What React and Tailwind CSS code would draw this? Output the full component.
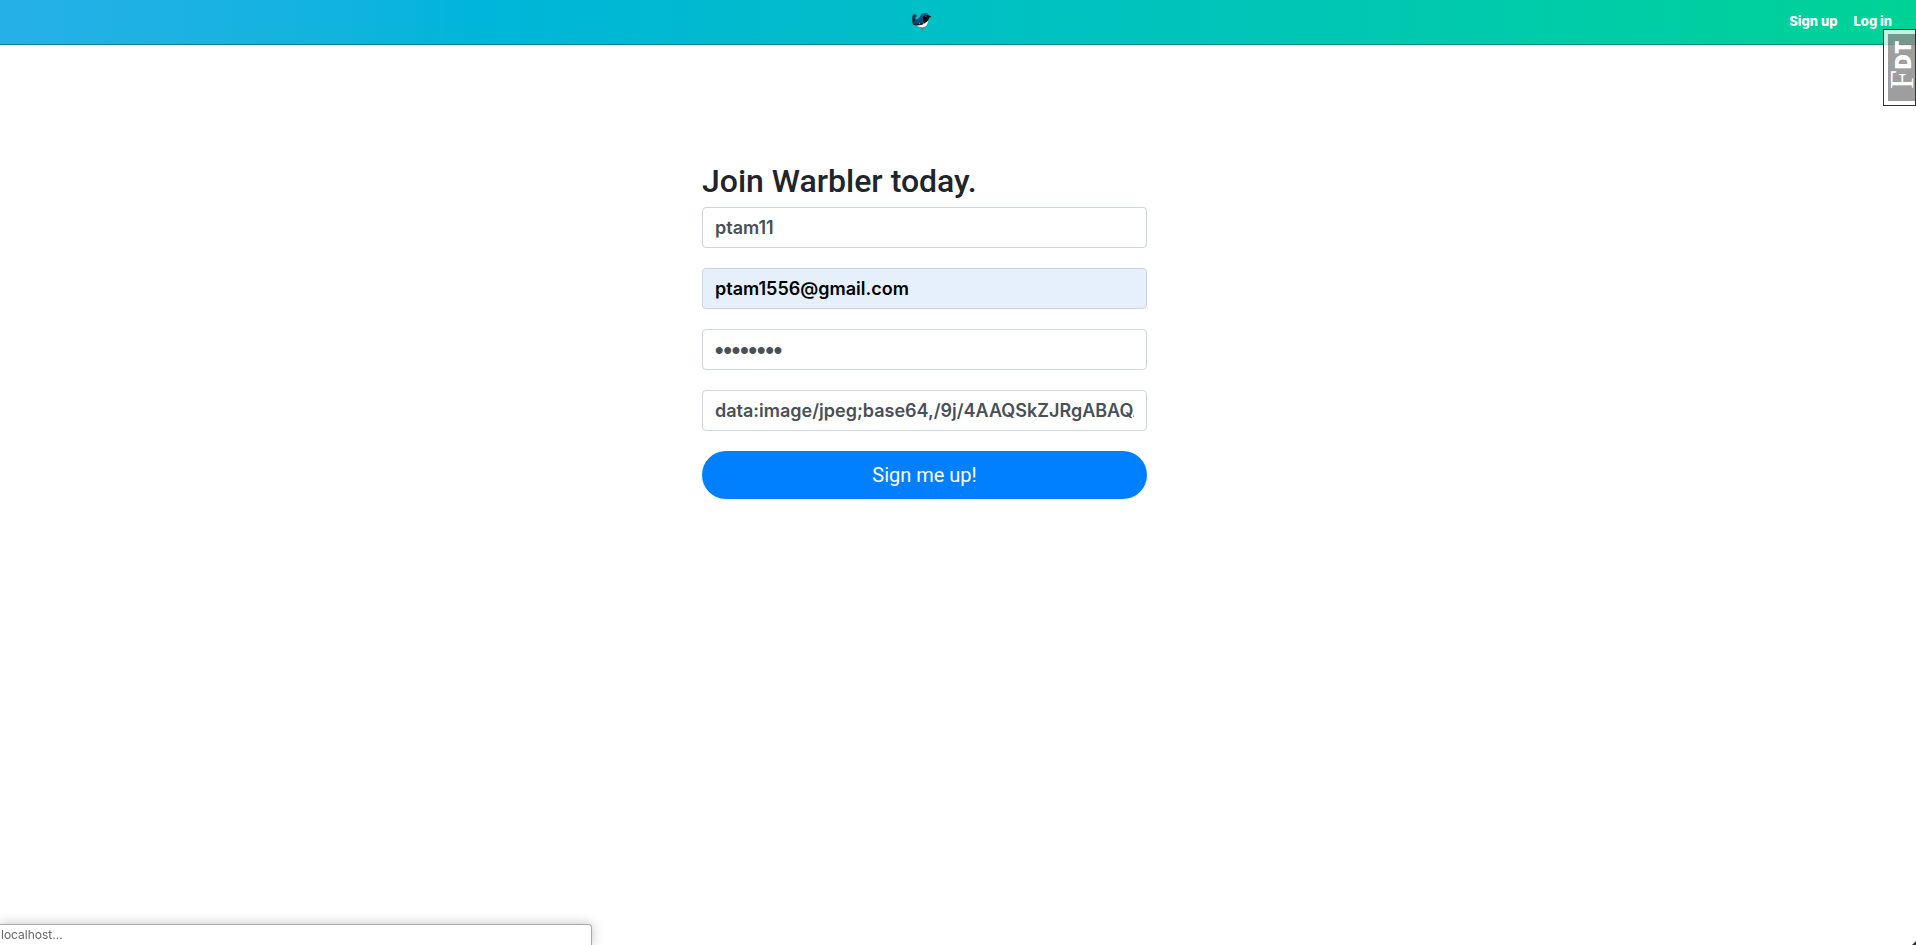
function BirdLogo() {
  return (
    <svg viewBox="0 0 60 51" className="block h-[17px] w-5" aria-hidden="true">
      <path d="M25 41l6 6M37 41l-5 5 1 4" stroke="#8a5a48" strokeWidth="3" fill="none" />
      <path d="M12 34c4 6 10 9 17 9 12 0 19-8 20-22l-10 2z" fill="#fff" />
      <path d="M2 9l4-5 6 1 2 4-4 5 2 5c4 1 7-3 12-8 3-7 8-10 14-10 7 0 12 4 13 8l-4 12-8 5-6 8c-8 3-19 3-29 1l-3-4z" fill="#0d4a78" />
      <path d="M1 10l5-6 6 1 2 4-5 3-2 6 3 4-4 8H2z" fill="#0f2c40" />
      <path d="M33 9l8-3 9 1 9 4-8 4c-1 7-4 11-9 13l-5 4-3-8z" fill="#060d15" />
      <path d="M27 9c2-6 8-8 13-8 5 0 9 2 11 5l-11-1-7 6z" fill="#1a658c" />
      <path d="M3 32l10 1 10-3 8 1 2 3-6 2c-9 2-17 1-23-1z" fill="#101d29" />
      <circle cx="42" cy="9" r="1.6" fill="#d5eaf2" />
      <path d="M20 32l5-2-2 4z" fill="#dce7ee" />
    </svg>
  );
}

const fields = [
  { id: "username", label: "Username", type: "text", value: "ptam11", look: "text-[18px] bg-white text-[#495057]" },
  { id: "email", label: "E-mail", type: "email", value: "ptam1556@gmail.com", look: "text-[18px] bg-[#e6effc] text-black" },
  {
    id: "password",
    label: "Password",
    type: "password",
    value: "password",
    look: "font-['Liberation_Sans',sans-serif] text-[24px] bg-white text-[#495057]",
  },
  {
    id: "image",
    label: "Image URL",
    type: "text",
    value: "data:image/jpeg;base64,/9j/4AAQSkZJRgABAQAAAQABAAD",
    look: "text-[18px] bg-white text-[#495057]",
  },
];

export default function App() {
  return (
    <div className="flex min-h-screen flex-col bg-white font-['Inter',sans-serif]">
      <header className="grid h-[45px] grid-cols-[1fr_auto_1fr] items-center border-b border-black/30 bg-linear-to-r from-[#25b0e8] from-0% via-[#00b5da] via-25% to-[#00d296] to-100% px-6">
        <span />
        <a href="#home" aria-label="Warbler" className="mr-[72px] pb-px">
          <BirdLogo />
        </a>
        <nav className="flex justify-end gap-4 pb-0.5 text-[13px] leading-5 font-extrabold text-white">
          <a href="#signup">Sign up</a>
          <a href="#login">Log in</a>
        </nav>
      </header>

      <main className="flex flex-1 justify-center px-4 pt-[116px] md:pr-[83px]">
        <form className="w-full max-w-[445px]" onSubmit={(e) => e.preventDefault()}>
          <h2 className="mb-1.5 font-['Roboto',sans-serif] text-[32px] leading-10 font-medium text-[#212529]">
            Join Warbler today.
          </h2>
          <div className="mb-5 flex flex-col gap-5">
            {fields.map((f) => (
              <input
                key={f.id}
                id={f.id}
                aria-label={f.label}
                type={f.type}
                defaultValue={f.value}
                className={`block h-[41px] w-full rounded border border-[#ced4da] px-3 font-semibold outline-none ${f.look}`}
              />
            ))}
          </div>
          <button
            type="submit"
            className="h-12 w-full rounded-full bg-[#0080ff] font-['Roboto',sans-serif] text-[20px] text-white"
          >
            Sign me up!
          </button>
        </form>
      </main>

      <button
        type="button"
        aria-label="FDT"
        className="absolute top-[29px] right-0 h-[77px] w-[33px] border border-black/80 bg-white/75 p-1 pr-0"
      >
        <span className="flex h-full w-full rotate-180 items-center justify-center bg-black/38 pt-1.5 leading-none text-white [writing-mode:vertical-rl]">
          <span className="font-['Liberation_Serif',serif] text-[34px] leading-none">F</span>
          <span className="font-['Open_Sans',sans-serif] text-[22px] leading-none font-extrabold">DT</span>
        </span>
      </button>

      <div className="fixed bottom-0 left-0 h-[21px] w-[592px] rounded-tr border-t border-r border-[#aaa] bg-white pl-px text-[12px] leading-5 text-[#666] shadow-[0_0_12px_rgba(0,0,0,0.25)]">
        localhost...
      </div>
      <svg viewBox="0 0 4 4" className="fixed right-0 bottom-0 size-1" aria-hidden="true">
        <path d="M4 0v4H0z" fill="#333" />
      </svg>
    </div>
  );
}
